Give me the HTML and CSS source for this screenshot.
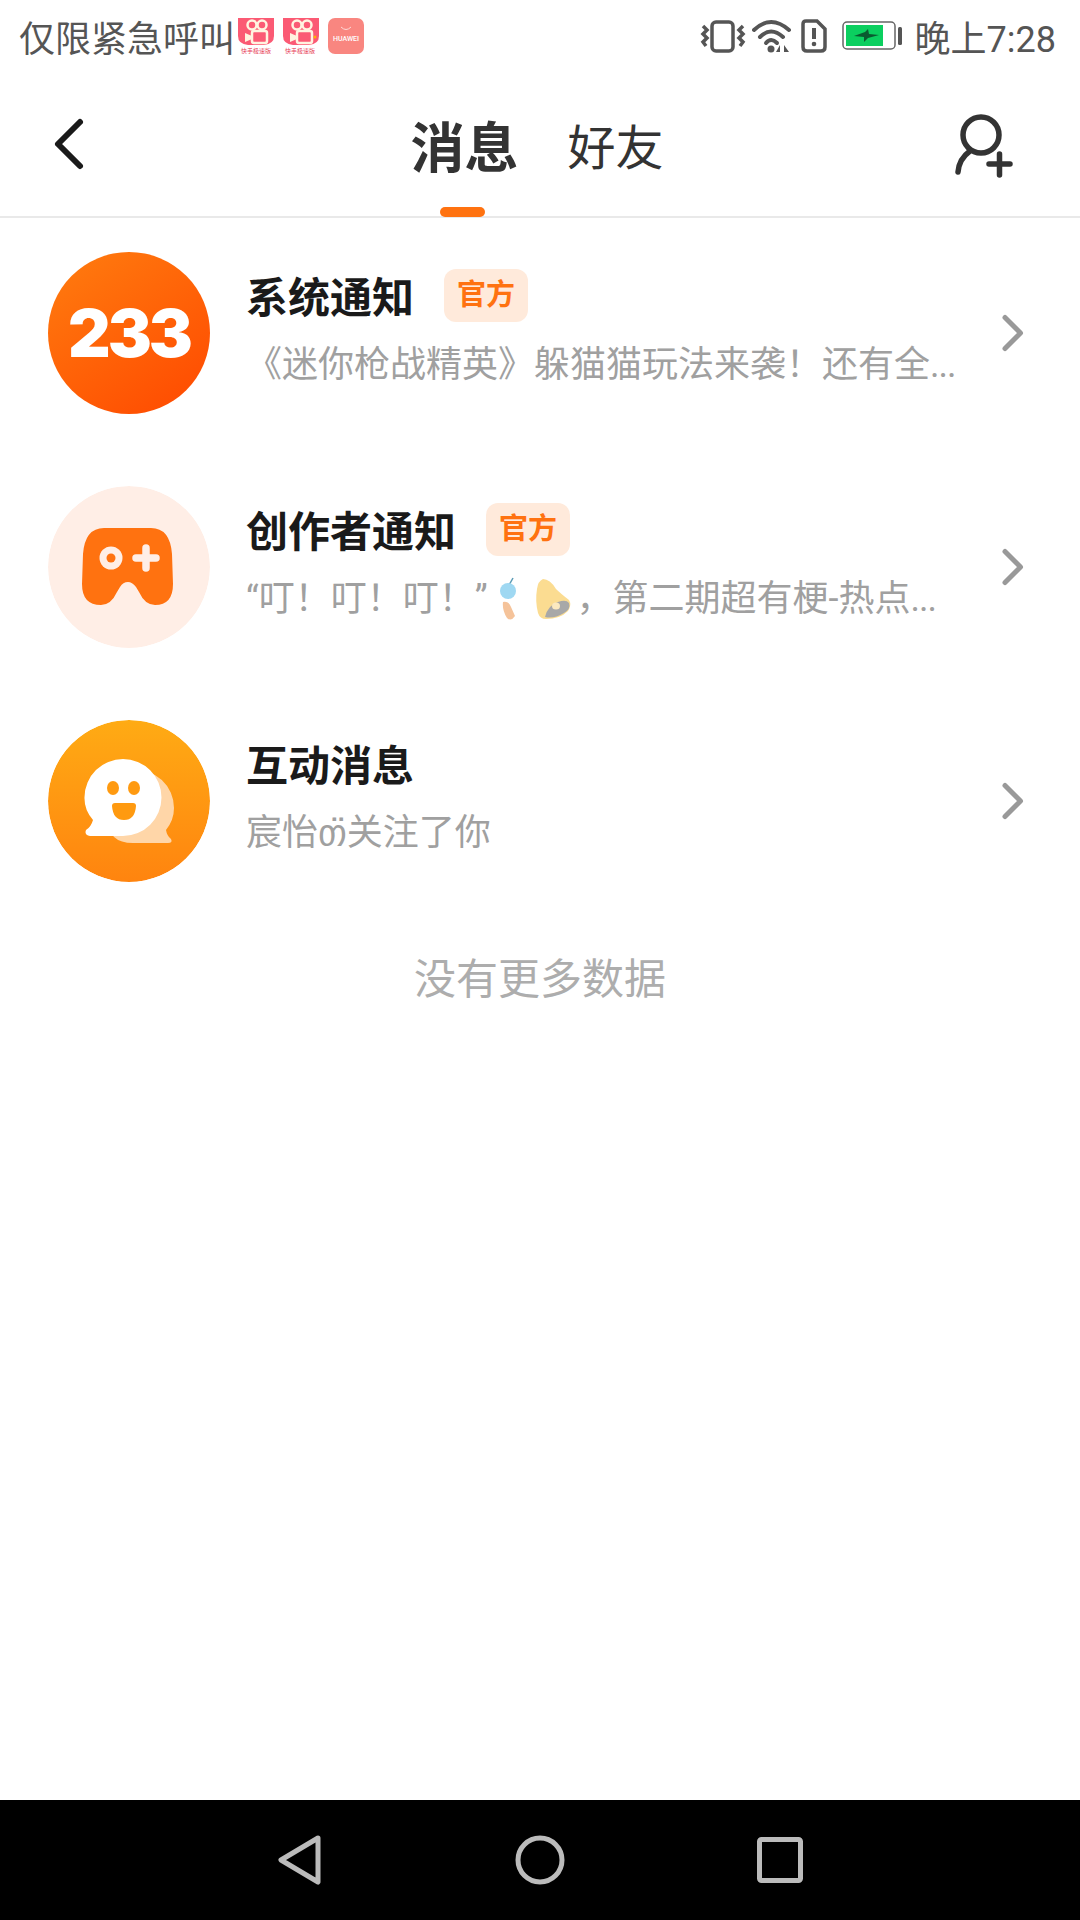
FILE: index.html
```html
<!DOCTYPE html>
<html>
    <head>
        <title>消息</title>
        <link rel="stylesheet" href="styles.css">
    </head>
    <body>
        <div class="app">
            <div class="status-bar">
                <div class="status-left">
                    <span class="status-text">仅限紧急呼叫</span>
                    <svg class="app-icon" viewBox="0 0 36 36">
                        <path d="M0 0H36V18Q36 26 26 27H10Q0 26 0 18Z" fill="#fb5a74"/>
                        <circle cx="14" cy="7" r="4.500" fill="none" stroke="#fff3e0" stroke-width="2.500"/>
                        <circle cx="24" cy="7" r="4.500" fill="none" stroke="#fff3e0" stroke-width="2.500"/>
                        <rect x="14" y="13" width="15" height="12" rx="2" fill="none" stroke="#fff3e0" stroke-width="2.500"/>
                        <path d="M7 15L14 18V21L7 24Z" fill="#fff3e0"/>
                        <text class="app-icon-label" x="18" y="35">快手极速版</text>
                    </svg>
                    <svg class="app-icon" viewBox="0 0 36 36">
                        <path d="M0 0H36V18Q36 26 26 27H10Q0 26 0 18Z" fill="#fb5a74"/>
                        <circle cx="14" cy="7" r="4.500" fill="none" stroke="#fff3e0" stroke-width="2.500"/>
                        <circle cx="24" cy="7" r="4.500" fill="none" stroke="#fff3e0" stroke-width="2.500"/>
                        <rect x="14" y="13" width="15" height="12" rx="2" fill="none" stroke="#fff3e0" stroke-width="2.500"/>
                        <path d="M7 15L14 18V21L7 24Z" fill="#fff3e0"/>
                        <circle cx="32" cy="19" r="1.500" fill="#ffb300"/>
                        <text class="app-icon-label" x="17" y="35">快手极速版</text>
                    </svg>
                    <svg class="app-icon" viewBox="0 0 36 36">
                        <rect width="36" height="36" rx="7" fill="#f98680"/>
                        <path d="M13 9Q18 14 23 9" fill="none" stroke="#ffd9d6" stroke-width="1"/>
                        <text class="huawei-label" x="18" y="23">HUAWEI</text>
                    </svg>
                </div>
                <div class="status-right">
                    <svg class="vibrate-icon" width="46" height="34" viewBox="0 0 46 34">
                        <rect x="12" y="3" width="21" height="29" rx="4" fill="none" stroke="#555" stroke-width="3.500"/>
                        <path d="M3 7L7 11L3 15L7 19L3 23L6 27" fill="none" stroke="#555" stroke-width="3.500"/>
                        <path d="M43 7L39 11L43 15L39 19L43 23L40 27" fill="none" stroke="#555" stroke-width="3.500"/>
                    </svg>
                    <svg class="wifi-icon" width="40" height="34" viewBox="0 0 40 34">
                        <path d="M2 11Q19 -5 37 11" fill="none" stroke="#555" stroke-width="4" stroke-linecap="round"/>
                        <path d="M8 18Q19 7 31 18" fill="none" stroke="#555" stroke-width="4" stroke-linecap="round"/>
                        <path d="M14 24Q19 18 25 24" fill="none" stroke="#555" stroke-width="4" stroke-linecap="round"/>
                        <circle cx="19" cy="30" r="3.500" fill="#555"/>
                        <path d="M28 33V26L24 33ZM32 26V33L37 33Z" fill="#555"/>
                    </svg>
                    <svg class="sim-icon" width="26" height="34" viewBox="0 0 26 34">
                        <path d="M5 2H16L24 10V28Q24 32 20 32H6Q2 32 2 28V5Q2 2 5 2Z" fill="none" stroke="#555" stroke-width="3.500"/>
                        <path d="M13 9V20" stroke="#555" stroke-width="4"/>
                        <circle cx="13" cy="25" r="2.300" fill="#555"/>
                    </svg>
                    <svg class="battery-icon" width="61" height="30" viewBox="0 0 61 30">
                        <rect x="1" y="1" width="52" height="27" rx="4" fill="#fff" stroke="#666" stroke-width="1.500"/>
                        <rect x="4" y="4" width="37" height="21" fill="#0bcf5f"/>
                        <path d="M12 15L23 11L26 8L27 13L37 14L26 17L22 21L22 16Z" fill="#0a5a30"/>
                        <rect x="56" y="6" width="4" height="18" rx="1.500" fill="#555"/>
                    </svg>
                    <span class="status-text">晚上7:28</span>
                </div>
            </div>

            <div class="top-bar">
                <svg class="back-btn" width="36" height="56" viewBox="0 0 36 56">
                    <path d="M30 6L8 28L30 50" fill="none" stroke="#1a1a1a" stroke-width="6" stroke-linecap="round" stroke-linejoin="round"/>
                </svg>
                <div class="tabs">
                    <span class="tab active">消息</span>
                    <span class="tab">好友</span>
                </div>
                <svg class="add-btn" width="60" height="70" viewBox="0 0 60 70">
                    <circle cx="27" cy="26" r="18" fill="none" stroke="#333" stroke-width="5.500"/>
                    <path d="M4 63Q5 50 16 42" fill="none" stroke="#333" stroke-width="5.500" stroke-linecap="round"/>
                    <path d="M35 55H56M45.500 45V66" stroke="#333" stroke-width="5.500" stroke-linecap="round"/>
                </svg>
            </div>

            <div class="msg-list">
                <div class="msg-row">
                    <div class="avatar avatar-system">233</div>
                    <div class="msg-text">
                        <div class="msg-title"><span>系统通知</span><span class="badge">官方</span></div>
                        <div class="msg-sub">《迷你枪战精英》躲猫猫玩法来袭！还有全<span class="dots">...</span></div>
                    </div>
                    <svg class="chevron" width="26" height="44" viewBox="0 0 26 44">
                        <path d="M5 6.500L20.500 22L5 37.500" fill="none" stroke="#999" stroke-width="5" stroke-linecap="round" stroke-linejoin="round"/>
                    </svg>
                </div>

                <div class="msg-row">
                    <svg class="avatar" viewBox="0 0 162 162">
                        <circle cx="81" cy="81" r="81" fill="#ffeee6"/>
                        <path d="M56 42H103Q122 42 124 68L125 98Q125 119 107 119Q97 119 91 106L88 101Q84 96 80 96Q75 96 72 101L69 106Q63 119 53 119Q34 119 34 98L35 68Q37 42 56 42Z" fill="#ff7210"/>
                        <circle cx="63" cy="72" r="11.500" fill="#ffeee6"/>
                        <circle cx="63" cy="72" r="4.500" fill="#ff7210"/>
                        <path d="M88 72H108M98 62V82" stroke="#ffeee6" stroke-width="7.500" stroke-linecap="round"/>
                    </svg>
                    <div class="msg-text">
                        <div class="msg-title"><span>创作者通知</span><span class="badge">官方</span></div>
                        <div class="msg-sub">
                            <span>“叮！叮！叮！”</span>
                            <svg class="emoji" viewBox="0 0 44 44">
                                <path d="M25 1L20 10" stroke="#5b9bb5" stroke-width="1.500"/>
                                <circle cx="20" cy="14" r="8" fill="#9fd8f2"/>
                                <path d="M15 25Q21 24 23 30L27 39Q23 45 19 41Q14 33 15 25Z" fill="#f5c39a"/>
                            </svg>
                            <svg class="emoji" viewBox="0 0 44 44">
                                <path d="M11 2Q6 4 5 12Q3 24 6 36Q8 42 14 42Q28 42 36 34Q40 28 37 23Q28 16 24 12Q18 2 11 2Z" fill="#fbdc91"/>
                                <path d="M13 40Q16 28 26 25Q34 22 37 26Q39 32 32 36Q22 42 13 40Z" fill="#a8a8a8"/>
                                <ellipse cx="24" cy="29" rx="4" ry="3.500" fill="#fbe9c0"/>
                            </svg>
                            <span class="sub-rest">，第二期超有梗-热点<span class="dots">...</span></span>
                        </div>
                    </div>
                    <svg class="chevron" width="26" height="44" viewBox="0 0 26 44">
                        <path d="M5 6.500L20.500 22L5 37.500" fill="none" stroke="#999" stroke-width="5" stroke-linecap="round" stroke-linejoin="round"/>
                    </svg>
                </div>

                <div class="msg-row">
                    <svg class="avatar" viewBox="0 0 162 162">
                        <defs>
                            <linearGradient id="chat-bg" x1="0" y1="0" x2="0" y2="1">
                                <stop offset="0" stop-color="#ffab14"/>
                                <stop offset="1" stop-color="#ff840f"/>
                            </linearGradient>
                        </defs>
                        <circle cx="81" cy="81" r="81" fill="url(#chat-bg)"/>
                        <path d="M85 50A38 38 0 0 1 126 88Q126 100 118 110Q119 116 123 119Q125 123 120 123H85Q60 123 60 100Z" fill="#ffd6a8"/>
                        <path d="M75 39A38.500 38.500 0 0 1 75 116H42Q36 115 38 110Q43 107 45 100Q36 90 36.500 77A38.500 38.500 0 0 1 75 39Z" fill="#fff"/>
                        <ellipse cx="65" cy="68" rx="6" ry="7" fill="#ff9a10"/>
                        <ellipse cx="86" cy="68" rx="6" ry="7" fill="#ff9a10"/>
                        <path d="M67 83H85Q88 83 88 86Q87 100 76 100Q65 100 64 86Q64 83 67 83Z" fill="#ff9a10"/>
                    </svg>
                    <div class="msg-text">
                        <div class="msg-title"><span>互动消息</span></div>
                        <div class="msg-sub">宸怡<span class="odd-char">თ̈</span>关注了你</div>
                    </div>
                    <svg class="chevron" width="26" height="44" viewBox="0 0 26 44">
                        <path d="M5 6.500L20.500 22L5 37.500" fill="none" stroke="#999" stroke-width="5" stroke-linecap="round" stroke-linejoin="round"/>
                    </svg>
                </div>
            </div>

            <p class="no-more">没有更多数据</p>

            <div class="nav-bar">
                <svg width="46" height="52" viewBox="0 0 46 52">
                    <path d="M41 4L4 26L41 48Z" fill="none" stroke="#bbb" stroke-width="5" stroke-linejoin="round"/>
                </svg>
                <svg width="50" height="50" viewBox="0 0 50 50">
                    <circle cx="25" cy="25" r="22" fill="none" stroke="#bbb" stroke-width="5"/>
                </svg>
                <svg width="46" height="46" viewBox="0 0 46 46">
                    <rect x="2.500" y="2.500" width="41" height="41" rx="2" fill="none" stroke="#bbb" stroke-width="5"/>
                </svg>
            </div>
        </div>
    </body>
</html>
```

FILE: styles.css
```css
:root {
    --orange: #ff7210;
    --title-clr: #1a1a1a;
    --sub-clr: #a0a0a0;
    --status-clr: #555555;
}

body {
    margin: 0;
    background-color: #ffffff;
    font-family: Roboto, 'Noto Sans CJK SC', sans-serif;
}

.app {
    display: flex;
    flex-direction: column;
    height: 1920px;
}

.status-bar {
    display: flex;
    justify-content: space-between;
    align-items: center;
    height: 72px;
    padding: 0 24px 0 19px;
    color: var(--status-clr);
}
.status-text {
    padding-top: 8px;
    font-size: 36px;
    line-height: 64px;
}
.status-left {
    display: flex;
    align-items: center;
}
.status-left .status-text {
    margin-right: 3px;
}
.status-right {
    display: flex;
    align-items: center;
}
.app-icon {
    width: 36px;
    height: 36px;
    margin-right: 9px;
}
.app-icon-label {
    font-size: 6px;
    fill: #e8455c;
    text-anchor: middle;
}
.huawei-label {
    font-size: 7px;
    font-weight: 500;
    fill: #ffffff;
    text-anchor: middle;
}
.vibrate-icon {
    margin-right: 6px;
}
.wifi-icon {
    margin-right: 9px;
}
.sim-icon {
    margin-right: 15px;
}
.battery-icon {
    margin-right: 12px;
}

.top-bar {
    display: grid;
    grid-template-columns: 1fr auto 1fr;
    align-items: center;
    height: 144px;
    padding: 0 66px 0 50px;
    border-bottom: 2px solid #e9e9e9;
}
.add-btn {
    justify-self: end;
}
.tabs {
    display: flex;
    align-items: center;
    gap: 49px;
    margin-left: 10px;
    color: #333333;
}
.tab {
    position: relative;
    font-size: 48px;
}
.tab.active {
    font-size: 54px;
    font-weight: 700;
}
.tab.active::after {
    content: '';
    position: absolute;
    left: 30px;
    bottom: -33px;
    width: 45px;
    height: 10px;
    border-radius: 5px;
    background-color: var(--orange);
}

.msg-list {
    display: flex;
    flex-direction: column;
    gap: 72px;
    padding: 34px 54px 0 48px;
}
.msg-row {
    display: flex;
    align-items: center;
}
.avatar {
    flex: none;
    width: 162px;
    height: 162px;
    border-radius: 50%;
}
.avatar-system {
    display: flex;
    align-items: center;
    justify-content: center;
    background: linear-gradient(145deg, #ff7d0f, #ff4800);
    color: #ffffff;
    font-family: Inter, sans-serif;
    font-size: 66px;
    font-weight: 900;
    letter-spacing: -3px;
}
.msg-text {
    flex: 1;
    min-width: 0;
    margin-left: 36px;
    padding-bottom: 10px;
}
.msg-title {
    display: flex;
    align-items: center;
    gap: 30px;
    height: 58px;
    color: var(--title-clr);
    font-size: 42px;
    font-weight: 700;
}
.badge {
    margin-top: 2px;
    padding: 0 13px;
    border-radius: 12px;
    background-color: #ffeadb;
    color: var(--orange);
    font-size: 29px;
    line-height: 53px;
}
.msg-sub {
    display: flex;
    align-items: center;
    margin-top: 15px;
    color: var(--sub-clr);
    font-size: 36px;
    line-height: 52px;
    white-space: nowrap;
}
.dots {
    letter-spacing: -1px;
}
.emoji {
    width: 44px;
    height: 44px;
}
.sub-rest {
    margin-left: 1px;
}
.odd-char {
    font-family: 'DejaVu Sans', sans-serif;
    font-size: 36px;
}
.chevron {
    flex: none;
}

.no-more {
    margin: 68px 0 0;
    color: #adadad;
    font-size: 42px;
    line-height: 60px;
    text-align: center;
}

.nav-bar {
    display: grid;
    grid-template-columns: repeat(3, 240px);
    justify-content: center;
    justify-items: center;
    align-items: center;
    height: 120px;
    margin-top: auto;
    background-color: #000000;
}
```
